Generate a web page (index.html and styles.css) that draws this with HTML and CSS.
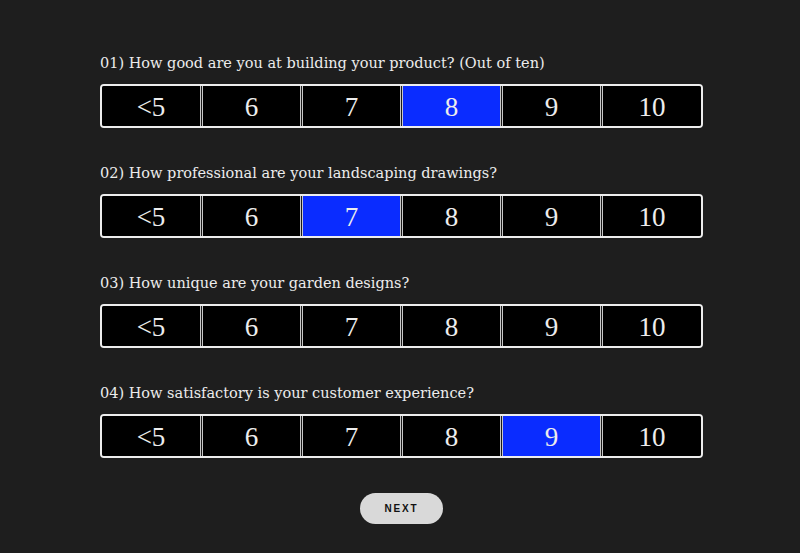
FILE: index.html
```html
<!DOCTYPE html>
<html>
<head>
<meta charset="utf-8">
<link rel="stylesheet" href="styles.css">
</head>
<body>
<main class="survey">
  <section class="question">
    <p class="label">01) How good are you at building your product? (Out of ten)</p>
    <div class="scale">
      <div class="cell">&lt;5</div><div class="cell">6</div><div class="cell">7</div><div class="cell selected">8</div><div class="cell">9</div><div class="cell">10</div>
    </div>
  </section>
  <section class="question">
    <p class="label">02) How professional are your landscaping drawings?</p>
    <div class="scale">
      <div class="cell">&lt;5</div><div class="cell">6</div><div class="cell selected">7</div><div class="cell">8</div><div class="cell">9</div><div class="cell">10</div>
    </div>
  </section>
  <section class="question">
    <p class="label">03) How unique are your garden designs?</p>
    <div class="scale">
      <div class="cell">&lt;5</div><div class="cell">6</div><div class="cell">7</div><div class="cell">8</div><div class="cell">9</div><div class="cell">10</div>
    </div>
  </section>
  <section class="question">
    <p class="label">04) How satisfactory is your customer experience?</p>
    <div class="scale">
      <div class="cell">&lt;5</div><div class="cell">6</div><div class="cell">7</div><div class="cell">8</div><div class="cell selected">9</div><div class="cell">10</div>
    </div>
  </section>
  <div class="actions">
    <button class="next">NEXT</button>
  </div>
</main>
</body>
</html>
```

FILE: styles.css
```css
html, body {
  margin: 0;
  padding: 0;
  background: #1e1e1e;
  height: 100%;
}
.survey {
  width: 603px;
  margin: 0 auto 0 100px;
  padding-top: 53px;
  display: flex;
  flex-direction: column;
}
.question {
  display: flex;
  flex-direction: column;
  gap: 11px;
  margin-bottom: 35px;
}
.label {
  margin: 0;
  font-family: "DejaVu Serif", serif;
  font-size: 14.5px;
  line-height: 20px;
  color: #ececec;
}
.scale {
  display: grid;
  grid-template-columns: repeat(6, 1fr);
  height: 40px;
  border: 2px solid #ededed;
  border-radius: 4px;
  background: #1a1a1a;
  gap: 1px;
  overflow: hidden;
}
.cell {
  background: #000;
  border-left: 1px solid #c8c8c8;
  border-right: 1px solid #c8c8c8;
  display: flex;
  align-items: center;
  justify-content: center;
  font-family: "Liberation Serif", serif;
  font-size: 27px;
  padding-top: 2px;
  color: #ededed;
}
.cell:first-child { border-left: none; }
.cell:last-child { border-right: none; }
.cell.selected { background: #0a2cff; }
.actions {
  display: flex;
  justify-content: center;
}
.next {
  width: 83px;
  height: 31px;
  border: none;
  border-radius: 16px;
  background: #d9d9d9;
  font-family: "Liberation Sans", sans-serif;
  font-weight: bold;
  font-size: 10px;
  letter-spacing: 1.8px;
  color: #111;
  padding: 0;
}
```
